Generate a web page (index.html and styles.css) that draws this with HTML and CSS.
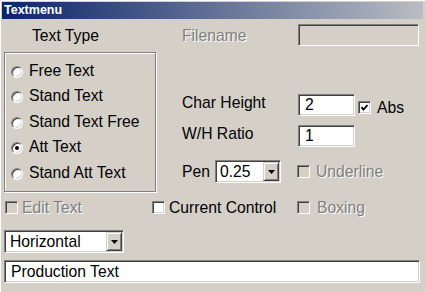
FILE: index.html
```html
<!DOCTYPE html>
<html lang="en">
<head>
  <meta charset="UTF-8">
  <title>Textmenu</title>
  <link rel="stylesheet" href="styles.css">
</head>
<body>

  <div class="window">
    <div class="titlebar">Textmenu</div>

    <div class="top">
      <div class="left">
        <div class="group-label">Text Type</div>
        <div class="groupbox">
          <div class="radio-row"><span class="radio"></span>Free Text</div>
          <div class="radio-row"><span class="radio"></span>Stand Text</div>
          <div class="radio-row"><span class="radio"></span>Stand Text Free</div>
          <div class="radio-row"><span class="radio checked"></span>Att Text</div>
          <div class="radio-row"><span class="radio"></span>Stand Att Text</div>
        </div>
      </div>

      <div class="right">
        <div class="row row-filename">
          <span class="label disabled">Filename</span>
          <div class="field field-wide field-disabled"></div>
        </div>

        <div class="row row-height">
          <span class="label label-raised">Char Height</span>
          <div class="field field-small">2</div>
          <span class="check-item check-abs">
            <span class="checkbox">
              <svg width="9" height="9" viewBox="0 0 9 9"><polyline points="1.5,4 3.5,6.5 7.5,2" fill="none" stroke="#000" stroke-width="1.8"/></svg>
            </span>Abs
          </span>
        </div>

        <div class="row row-ratio">
          <span class="label label-raised">W/H Ratio</span>
          <div class="field field-small">1</div>
        </div>

        <div class="row row-pen">
          <span class="label label-pen">Pen</span>
          <div class="select select-pen">
            <span class="select-value">0.25</span>
            <span class="drop-btn"><svg width="7" height="4" viewBox="0 0 7 4"><polygon points="0,0 7,0 3.5,4" fill="#000"/></svg></span>
          </div>
          <span class="check-item disabled check-underline"><span class="checkbox checkbox-disabled"></span>Underline</span>
        </div>
      </div>
    </div>

    <div class="check-row">
      <span class="check-item disabled col-1"><span class="checkbox checkbox-disabled"></span>Edit Text</span>
      <span class="check-item col-2"><span class="checkbox"></span>Current Control</span>
      <span class="check-item disabled"><span class="checkbox checkbox-disabled"></span>Boxing</span>
    </div>

    <div class="select select-dir">
      <span class="select-value">Horizontal</span>
      <span class="drop-btn"><svg width="7" height="4" viewBox="0 0 7 4"><polygon points="0,0 7,0 3.5,4" fill="#000"/></svg></span>
    </div>

    <div class="field field-text">Production Text</div>
  </div>

</body>
</html>
```

FILE: styles.css
```css
body {
  margin: 0;
  font-family: "Liberation Sans", Arial, sans-serif;
  font-size: 15.7px;
  color: #000;
}
.window {
  width: 425px;
  height: 292px;
  box-sizing: border-box;
  padding: 2px;
  background: #d4d0c8;
  box-shadow: inset 1px 1px 0 #fff;
  overflow: hidden;
}
.titlebar {
  height: 17px;
  line-height: 17px;
  padding-left: 2px;
  background: linear-gradient(to right, #0a246a, #b9bcc2);
  color: #fff;
  font-weight: bold;
  font-size: 12.5px;
}
.top {
  display: flex;
}
.left {
  width: 152px;
  margin-left: 2px;
}
.group-label {
  margin-top: 8px;
  padding-left: 28px;
  line-height: 17px;
}
.groupbox {
  margin-top: 8px;
  height: 140px;
  box-sizing: border-box;
  border: 1px solid #808080;
  box-shadow: 1px 1px 0 #fff, inset 1px 1px 0 #fff;
  padding: 9px 0 0 6px;
  display: flex;
  flex-direction: column;
  gap: 8.5px;
}
.radio-row {
  display: flex;
  align-items: center;
  height: 17px;
  gap: 6px;
}
.radio {
  width: 12px;
  height: 12px;
  box-sizing: border-box;
  border-radius: 50%;
  background: #fff;
  border: 1px solid;
  border-color: #808080 #fff #fff #808080;
  box-shadow: inset 1px 1px 0 #404040, inset -1px -1px 0 #d4d0c8;
  position: relative;
  margin-top: 2px;
}
.radio.checked::after {
  content: "";
  position: absolute;
  left: 3px;
  top: 3px;
  width: 4px;
  height: 4px;
  border-radius: 50%;
  background: #000;
}
.right {
  margin-left: 26px;
}
.row {
  display: flex;
  align-items: center;
}
.label {
  width: 116px;
  line-height: 17px;
}
.label-raised {
  margin-bottom: 5px;
}
.label-pen {
  width: 33px;
}
.disabled {
  color: #808080;
  text-shadow: 1px 1px 0 #fff;
}
.row-filename {
  margin-top: 5px;
}
.row-height {
  margin-top: 48px;
}
.row-ratio {
  margin-top: 9px;
}
.row-pen {
  margin-top: 13px;
}
.field {
  height: 22px;
  box-sizing: border-box;
  background: #fff;
  border: 1px solid;
  border-color: #808080 #fff #fff #808080;
  box-shadow: inset 1px 1px 0 #404040, inset -1px -1px 0 #d4d0c8;
  padding-left: 6px;
  line-height: 20px;
}
.field-disabled {
  background: #d4d0c8;
}
.field-wide {
  width: 121px;
}
.field-small {
  width: 57px;
}
.field-text {
  margin: 7px 0 0 2px;
  width: 416px;
  height: 23px;
  line-height: 21px;
}
.check-item {
  display: flex;
  align-items: center;
  gap: 4px;
  line-height: 17px;
}
.checkbox {
  width: 13px;
  height: 13px;
  box-sizing: border-box;
  background: #fff;
  border: 1px solid;
  border-color: #808080 #fff #fff #808080;
  box-shadow: inset 1px 1px 0 #404040, inset -1px -1px 0 #d4d0c8;
  display: flex;
  align-items: center;
  justify-content: center;
}
.checkbox-disabled {
  background: #d4d0c8;
}
.check-abs {
  margin-left: 3px;
  margin-top: 5px;
  gap: 6px;
}
.check-underline {
  margin-left: 16px;
  gap: 6px;
}
.select {
  height: 23px;
  box-sizing: border-box;
  background: #fff;
  border: 1px solid;
  border-color: #808080 #fff #fff #808080;
  box-shadow: inset 1px 1px 0 #404040, inset -1px -1px 0 #d4d0c8;
  display: flex;
  align-items: center;
  padding: 2px 1px 2px 4px;
}
.select-value {
  flex: 1;
  line-height: 19px;
}
.select-pen {
  width: 66px;
}
.select-dir {
  margin: 14px 0 0 2px;
  width: 120px;
  padding-left: 5px;
}
.drop-btn {
  width: 16px;
  height: 19px;
  box-sizing: border-box;
  background: #d4d0c8;
  border: 1px solid;
  border-color: #d4d0c8 #404040 #404040 #d4d0c8;
  box-shadow: inset 1px 1px 0 #fff, inset -1px -1px 0 #808080;
  display: flex;
  align-items: center;
  justify-content: center;
}
.check-row {
  display: flex;
  margin: 7px 0 0 3px;
  height: 17px;
}
.col-1 {
  width: 147px;
}
.col-2 {
  width: 145px;
}
.check-row .disabled:last-child {
  gap: 7px;
}
```
